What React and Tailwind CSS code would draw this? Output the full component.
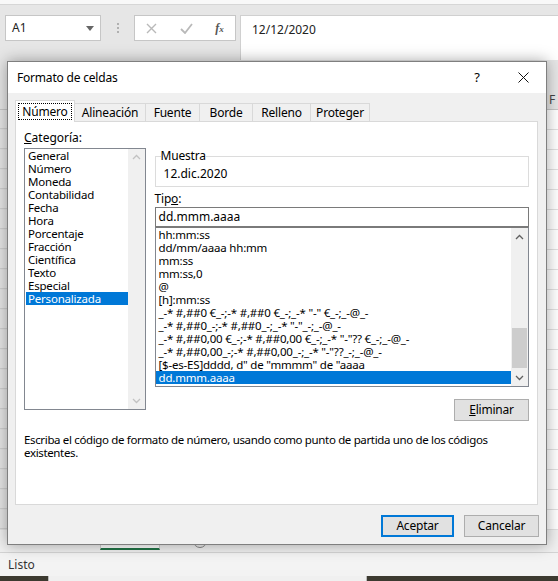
import React from "react";

const categorias = [
  "General",
  "Número",
  "Moneda",
  "Contabilidad",
  "Fecha",
  "Hora",
  "Porcentaje",
  "Fracción",
  "Científica",
  "Texto",
  "Especial",
  "Personalizada",
];

const tipos = [
  "hh:mm:ss",
  "dd/mm/aaaa hh:mm",
  "mm:ss",
  "mm:ss,0",
  "@",
  "[h]:mm:ss",
  '_-* #,##0 €_-;-* #,##0 €_-;_-* "-" €_-;_-@_-',
  '_-* #,##0_-;-* #,##0_-;_-* "-"_-;_-@_-',
  '_-* #,##0,00 €_-;-* #,##0,00 €_-;_-* "-"?? €_-;_-@_-',
  '_-* #,##0,00_-;-* #,##0,00_-;_-* "-"??_-;_-@_-',
  '[$-es-ES]dddd, d" de "mmmm" de "aaaa',
  "dd.mmm.aaaa",
];

const tabs = ["Alineación", "Fuente", "Borde", "Relleno", "Proteger"];
const tabW = ["w-[71px]", "w-[54px]", "w-[53px]", "w-[58px]", "w-[59px]"];

function Chevron({ up, color = "#606060" }) {
  return (
    <svg width="9" height="6" viewBox="0 0 9 6">
      <path
        d={up ? "M1 5 L4.5 1.5 L8 5" : "M1 1 L4.5 4.5 L8 1"}
        fill="none"
        stroke={color}
        strokeWidth="1.3"
      />
    </svg>
  );
}

function ExcelBack() {
  return (
    <div className="flex flex-col h-[581px] w-[558px] bg-[#e6e6e6] overflow-hidden">
      <div className="h-[5px] bg-[#f8f8f8] border-b border-[#d6d6d6]" />
      {/* formula bar */}
      <div className="flex h-[55px] pt-[10px] pl-[5px] bg-[#e6e6e6]">
        <div className="flex items-center justify-between w-[96px] h-[26px] bg-white border border-[#c6c6c6] pl-[6px] pr-[6px] text-[12px] text-[#222]">
          <span>A1</span>
          <svg width="8" height="5" viewBox="0 0 8 5">
            <path d="M0 0 H8 L4 5 Z" fill="#666" />
          </svg>
        </div>
        <div className="flex flex-col justify-center gap-[2px] w-[33px] h-[26px] items-center">
          <div className="w-[2px] h-[2px] bg-[#b0b0b0]" />
          <div className="w-[2px] h-[2px] bg-[#b0b0b0]" />
          <div className="w-[2px] h-[2px] bg-[#b0b0b0]" />
        </div>
        <div className="flex items-center justify-around w-[102px] h-[26px] bg-white border border-[#c6c6c6]">
          <svg width="11" height="11" viewBox="0 0 11 11">
            <path d="M1 1 L10 10 M10 1 L1 10" stroke="#b9b9b9" strokeWidth="1.4" />
          </svg>
          <svg width="13" height="11" viewBox="0 0 13 11">
            <path d="M1 6 L5 10 L12 1" fill="none" stroke="#b9b9b9" strokeWidth="1.8" />
          </svg>
          <span className="italic text-[12px] text-[#555] font-['Liberation_Serif',serif] font-bold">
            f<span className="text-[9px]">x</span>
          </span>
        </div>
        <div className="flex-1 ml-[4px] h-[45px] bg-white border border-[#d0d0d0] border-r-0 border-b-0 pl-[11px] pt-[5px] text-[12px] text-[#222]">
          12/12/2020
        </div>
      </div>
      {/* grid */}
      <div className="flex-1 flex flex-col bg-white">
        <div className="h-[29px] bg-[#e6e6e6]" />
        <div className="flex h-[21px] bg-[#e6e6e6] border-b border-[#c6c6c6]">
          <div className="w-[30px] border-r border-[#c6c6c6]" />
          <div className="flex-1" />
          <div className="w-[12px] pl-[3px] text-[12px] text-[#444] leading-[21px]">F</div>
        </div>
        {Array.from({ length: 21 }).map((_, i) => (
          <div key={i} className="flex h-[20px] border-b border-[#e1e1e1]">
            <div className="w-[30px] bg-[#e6e6e6] border-r border-[#c6c6c6] border-b border-b-[#d0d0d0]" />
            <div className="flex-1" />
          </div>
        ))}
      </div>
      {/* sheet tabs */}
      <div className="flex h-[23px] bg-[#f0f0f0] border-b border-[#d4d4d4]">
        <div className="ml-[100px] w-[60px] h-[20px] bg-white border-x border-[#d4d4d4] border-b-2 border-b-[#217346]" />
        <div className="ml-[33px] mt-[4px] w-[14px] h-[14px] rounded-full border border-[#888]" />
      </div>
      {/* status */}
      <div className="h-[23px] bg-[#f3f3f3] pl-[8px] text-[12px] text-[#333] leading-[23px]">Listo</div>
      <div className="flex h-[5px] bg-[#3c3a30]">
        <div className="ml-[48px] w-[319px] bg-[#f0f0f0] border-x border-[#bbb]" />
      </div>
    </div>
  );
}

export default function App() {
  return (
    <div className="relative w-[558px] h-[581px] overflow-hidden font-['Noto_Sans',sans-serif] text-[12px] text-black">
      <ExcelBack />
      {/* dialog */}
      <div className="absolute left-[7px] top-[61px] w-[540px] h-[484px] flex flex-col bg-[#f0f0f0] border border-[#7f7f7f] shadow-[0_0_14px_rgba(0,0,0,0.35)]">
        <div className="flex items-center h-[31px] bg-white pl-[9px] shrink-0">
          <span className="flex-1 tracking-[-0.2px]">Formato de celdas</span>
          <span className="w-[46px] text-center text-[13px]">?</span>
          <div className="w-[46px] flex justify-center">
            <svg width="11" height="11" viewBox="0 0 11 11">
              <path d="M0.5 0.5 L10.5 10.5 M10.5 0.5 L0.5 10.5" stroke="#111" strokeWidth="1" />
            </svg>
          </div>
        </div>
        <div className="flex-1 flex flex-col pl-[7px] pt-[7px]">
          {/* tab row */}
          <div className="flex items-end h-[21px]">
            <div className="relative z-10 -mb-px w-[60px] h-[22px] bg-white border border-[#d9d9d9] border-b-0 flex items-center justify-center">
              <span className="border border-dotted border-black px-[3px] leading-[15px] tracking-[-0.2px]">Número</span>
            </div>
            {tabs.map((t, i) => (
              <div
                key={t}
                className={`${tabW[i]} h-[18px] border border-l-0 border-[#d9d9d9] border-b-0 flex items-center justify-center tracking-[-0.2px]`}
              >
                {t}
              </div>
            ))}
          </div>
          {/* panel */}
          <div className="w-[523px] h-[384px] bg-white border border-[#d9d9d9] flex flex-col px-[8px] pt-[9px]">
            <div className="flex gap-[9px]">
              <div className="flex flex-col w-[122px]">
                <div className="h-[17px] leading-[14px]">
                  <span className="underline">C</span>ategoría:
                </div>
                <div className="flex h-[262px] border border-[#828790] pl-[1px]">
                  <div className="flex-1 flex flex-col text-[11.5px]">
                    {categorias.map((c) => (
                      <div
                        key={c}
                        className={`h-[13px] leading-[13px] pl-[2px] tracking-[-0.2px] ${c === "Personalizada" ? "bg-[#0078d7] text-white" : ""}`}
                      >
                        {c}
                      </div>
                    ))}
                  </div>
                  <div className="w-[17px] bg-[#f0f0f0] flex flex-col justify-between items-center py-[5px]">
                    <Chevron up color="#c2c2c2" />
                    <Chevron color="#c2c2c2" />
                  </div>
                </div>
              </div>
              <div className="flex flex-col w-[376px]">
                <fieldset className="h-[38px] border border-[#dcdcdc] mt-[18px] px-[5px]">
                  <legend className="px-0 leading-[14px] tracking-[-0.2px]">Muestra</legend>
                  <div className="pl-[3px] pt-[4px] leading-[14px]">12.dic.2020</div>
                </fieldset>
                <div className="h-[20px] pt-[5px] leading-[14px] tracking-[-0.2px]">
                  Tip<span className="underline">o</span>:
                </div>
                <div className="h-[20px] border border-[#7a7a7a] pl-[3px] leading-[18px]">dd.mmm.aaaa</div>
                <div className="flex h-[160px] border border-[#828790] border-t-[#7a7a7a]">
                  <div className="flex-1 flex flex-col text-[11.5px]">
                    {tipos.map((t, i) => (
                      <div
                        key={i}
                        className={`h-[13px] leading-[13px] pl-[3px] whitespace-pre tracking-[-0.2px] ${i === tipos.length - 1 ? "bg-[#0078d7] text-white" : ""}`}
                      >
                        {t}
                      </div>
                    ))}
                  </div>
                  <div className="w-[17px] bg-[#f0f0f0] flex flex-col items-center">
                    <div className="h-[17px] flex items-center"><Chevron up /></div>
                    <div className="flex-1 w-full flex flex-col justify-end pb-[1px]">
                      <div className="mx-[1px] h-[40px] bg-[#cdcdcd]" />
                    </div>
                    <div className="h-[17px] flex items-center"><Chevron /></div>
                  </div>
                </div>
                <div className="flex justify-end mt-[12px]">
                  <button className="w-[75px] h-[22px] bg-[#e1e1e1] border border-[#adadad] leading-[18px] tracking-[-0.2px]">
                    <span className="underline">E</span>liminar
                  </button>
                </div>
              </div>
            </div>
            <div className="mt-[12px] leading-[13px] text-[11.5px] tracking-[-0.35px]">
              <div className="whitespace-nowrap">
                Escriba el código de formato de número, usando como punto de partida uno de los códigos
              </div>
              <div>existentes.</div>
            </div>
          </div>
          {/* buttons */}
          <div className="flex justify-end gap-[10px] pr-[7px] mt-[10px]">
            <button className="w-[73px] h-[22px] bg-[#e1e1e1] border-2 border-[#0078d7] leading-[18px] tracking-[-0.2px]">Aceptar</button>
            <button className="w-[75px] h-[22px] bg-[#e1e1e1] border border-[#adadad] leading-[20px] tracking-[-0.2px]">Cancelar</button>
          </div>
        </div>
      </div>
    </div>
  );
}
